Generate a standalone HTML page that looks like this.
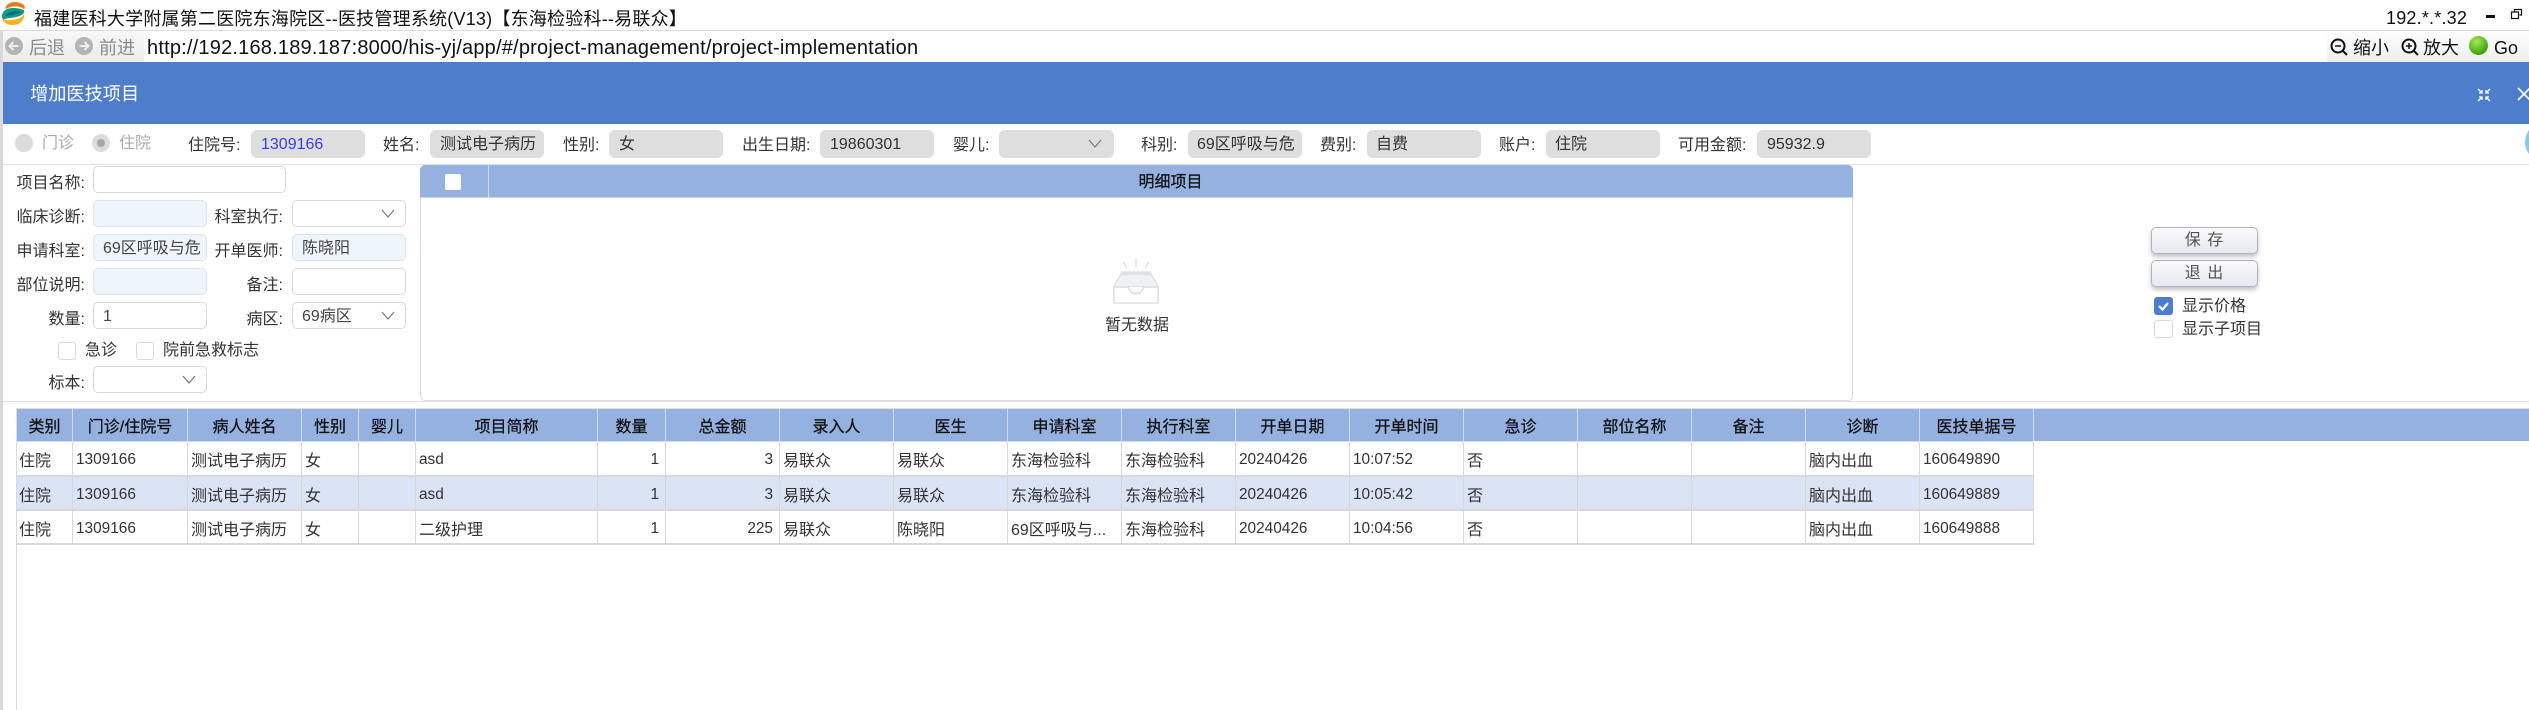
<!DOCTYPE html>
<html lang="zh"><head><meta charset="utf-8"><title>增加医技项目</title>
<style>
html,body{margin:0;padding:0;width:2529px;height:710px;overflow:hidden;background:#fff}
body{position:relative;font-family:"Liberation Sans","Noto Sans CJK SC",sans-serif;font-size:16px;color:#333}
.a,.t,.i,.c{position:absolute;box-sizing:border-box}
.t{white-space:nowrap;line-height:20px;height:20px}
.r{text-align:right}
.i{background:#dedede;border-radius:6px;height:28px;top:130px;width:114px;line-height:30px;padding-left:10px;white-space:nowrap;color:#333;overflow:hidden}
.f{border:1px solid #d9d9d9;background:#fff;border-radius:5px;height:27px;line-height:27px;padding-left:9px;white-space:nowrap;color:#444;position:absolute;box-sizing:border-box;overflow:hidden}
.b{background:#eef5fd;border-color:#dde3ea}
.c{width:18px;height:18px;border:1px solid #d9d9d9;border-radius:3px;background:#fff}
.btn{position:absolute;left:2151px;width:107px;height:27px;border:1px solid #b0b3bd;border-radius:5px;background:linear-gradient(#fafafb,#e6e9f2);box-shadow:0 3px 4px rgba(90,90,100,.35);box-sizing:border-box;text-align:center;line-height:25px;color:#555;font-size:16px;letter-spacing:1px}
table{position:absolute;left:16px;top:408px;border-collapse:collapse;table-layout:fixed;width:2018px;font-size:16px;color:#333}
td,th{border:1px solid #d8d8d8;padding:0 3px;white-space:nowrap;overflow:hidden;box-sizing:border-box;height:34px;font-weight:normal;text-align:left}
td{border-bottom:2px solid #d8d8d8;padding-top:2px}
td:first-child{padding-left:2px}
td.d{font-size:15.4px;padding-top:4px}
th{background:#94b1e0;color:#111;text-align:center;height:33px;border-color:#d3dcec;font-size:16px;-webkit-text-stroke:.25px #111;border-top:1px solid #ddd}
tr.s td{background:#dae4f5}
td.n{text-align:right;padding-right:6px;font-size:15.4px;padding-top:4px}
svg{position:absolute;overflow:visible}
</style></head><body>

<!-- title bar -->
<svg style="left:0;top:0" width="27" height="27" viewBox="0 0 27 27">
<path d="M7 5C11 1 19 1 24 5C25 7 25 9 24 9C20 6 12 5 6 9C5 8 6 6 7 5Z" fill="#ec7a18"/>
<path d="M2 15C3 10 8 8 13 8C18 8 21 9 24 10C25 14 21 16 16 17C11 18 6 18 3 20C2 18 2 17 2 15Z" fill="#129a86"/>
<path d="M8 13C12 11 18 11 21 11C20 13 16 14 13 15C10 15 7 16 5 16C6 15 7 14 8 13Z" fill="#0d6f7f"/>
<path d="M3 20C7 20 14 21 20 18C22 17 24 15 24 13C25 20 20 25 13 25C8 25 4 23 3 20Z" fill="#f2b21c"/>
</svg>
<div class="t" style="left:34px;top:8px;font-size:18px;line-height:22px;height:22px;color:#111;letter-spacing:.22px">福建医科大学附属第二医院东海院区--医技管理系统(V13)【东海检验科--易联众】</div>
<div class="t" style="left:2386px;top:7px;font-size:18px;line-height:22px;height:22px;color:#111;letter-spacing:.2px">192.*.*.32</div>
<div class="a" style="left:2486px;top:15px;width:9px;height:3px;background:#111"></div>
<svg style="left:2511px;top:9px" width="12" height="10" viewBox="0 0 12 10"><path d="M3.5 2.5V.5H10.5V6H8.5M.5 3H7.5V9.5H.5Z" fill="none" stroke="#111" stroke-width="1.2"/></svg>
<div class="a" style="left:0;top:30px;width:2529px;height:1px;background:#dedede"></div>

<!-- address bar -->
<div class="a" style="left:3px;top:31px;width:141px;height:31px;background:linear-gradient(#f8f8f8,#ececec)"></div>
<svg style="left:4px;top:36px" width="20" height="20" viewBox="0 0 20 20"><circle cx="10" cy="10" r="9" fill="#b4b4b4"/><path d="M14.5 10H6M9.5 6L5.5 10L9.5 14" fill="none" stroke="#eee" stroke-width="2"/></svg>
<svg style="left:74px;top:36px" width="20" height="20" viewBox="0 0 20 20"><circle cx="10" cy="10" r="9" fill="#b4b4b4"/><path d="M5.5 10H14M10.5 6L14.5 10L10.5 14" fill="none" stroke="#eee" stroke-width="2"/></svg>
<div class="t" style="left:29px;top:37px;font-size:18px;line-height:22px;height:22px;color:#8a8a8a">后退</div>
<div class="t" style="left:99px;top:37px;font-size:18px;line-height:22px;height:22px;color:#8a8a8a">前进</div>
<div class="t" style="left:147px;top:37px;font-size:20px;line-height:22px;height:22px;color:#111;letter-spacing:.2px">http://192.168.189.187:8000/his-yj/app/#/project-management/project-implementation</div>
<div class="a" style="left:2327px;top:31px;width:202px;height:31px;background:linear-gradient(#fff,#eee)"></div>
<svg style="left:2330px;top:38px" width="18" height="18" viewBox="0 0 18 18"><circle cx="8" cy="8" r="6.5" fill="none" stroke="#111" stroke-width="2"/><path d="M5 8H11" stroke="#111" stroke-width="1.5"/><path d="M13 13L17 17" stroke="#111" stroke-width="2"/></svg>
<div class="t" style="left:2353px;top:37px;font-size:18px;line-height:22px;height:22px;color:#111">缩小</div>
<svg style="left:2401px;top:38px" width="18" height="18" viewBox="0 0 18 18"><circle cx="8" cy="8" r="6.5" fill="none" stroke="#111" stroke-width="2"/><path d="M5 8H11M8 5V11" stroke="#111" stroke-width="1.5"/><path d="M13 13L17 17" stroke="#111" stroke-width="2"/></svg>
<div class="t" style="left:2423px;top:37px;font-size:18px;line-height:22px;height:22px;color:#111">放大</div>
<div class="a" style="left:2469px;top:36px;width:19px;height:19px;border-radius:50%;background:radial-gradient(circle at 40% 30%,#a6e85a,#55b51a 55%,#1f7a0c)"></div>
<div class="t" style="left:2494px;top:37px;font-size:18px;line-height:22px;height:22px;color:#111">Go</div>

<!-- left edge -->
<div class="a" style="left:0;top:31px;width:3px;height:679px;background:#d9d9d9"></div>

<!-- modal header -->
<div class="a" style="left:3px;top:62px;width:2526px;height:62px;background:#4e7ecb"></div>
<div class="t" style="left:30px;top:83px;font-size:18.2px;line-height:22px;height:22px;color:#fff">增加医技项目</div>
<svg style="left:2477px;top:88px" width="14" height="14" viewBox="0 0 14 14"><path d="M1 1L5 5M5 2V5H2M13 1L9 5M9 2V5H12M1 13L5 9M5 12V9H2M13 13L9 9M9 12V9H12" fill="none" stroke="#fff" stroke-width="1.3"/></svg>
<svg style="left:2517px;top:87px" width="14" height="14" viewBox="0 0 14 14"><path d="M1 1L13 13M13 1L1 13" fill="none" stroke="#fff" stroke-width="1.6"/></svg>

<!-- info row -->
<div class="a" style="left:15px;top:134px;width:18px;height:18px;border-radius:50%;background:#dcdcdc"></div>
<div class="t" style="left:42px;top:134px;color:#aaa">门诊</div>
<div class="a" style="left:92px;top:134px;width:18px;height:18px;border-radius:50%;background:#dcdcdc"></div>
<div class="a" style="left:97px;top:139px;width:8px;height:8px;border-radius:50%;background:#a8a8a8"></div>
<div class="t" style="left:119px;top:134px;color:#aaa">住院</div>

<div class="t" style="left:188px;top:136px">住院号:</div><div class="i" style="left:251px;color:#3340e0">1309166</div>
<div class="t" style="left:383px;top:136px">姓名:</div><div class="i" style="left:430px">测试电子病历</div>
<div class="t" style="left:563px;top:136px">性别:</div><div class="i" style="left:609px">女</div>
<div class="t" style="left:742px;top:136px">出生日期:</div><div class="i" style="left:820px">19860301</div>
<div class="t" style="left:953px;top:136px">婴儿:</div><div class="i" style="left:999px;width:115px"></div>
<svg style="left:1088px;top:139px" width="14" height="9" viewBox="0 0 14 9"><path d="M1 1L7 8L13 1" fill="none" stroke="#777" stroke-width="1.2"/></svg>
<div class="t" style="left:1141px;top:136px">科别:</div><div class="i" style="left:1188px;padding-left:9px">69区呼吸与危</div>
<div class="t" style="left:1320px;top:136px">费别:</div><div class="i" style="left:1367px;padding-left:9px">自费</div>
<div class="t" style="left:1499px;top:136px">账户:</div><div class="i" style="left:1546px;padding-left:9px">住院</div>
<div class="t" style="left:1678px;top:136px">可用金额:</div><div class="i" style="left:1757px">95932.9</div>
<div class="a" style="left:2525px;top:122px;width:40px;height:40px;border-radius:50%;background:#86cbe2"></div>
<div class="a" style="left:3px;top:164px;width:2526px;height:1px;background:#e2e2e2"></div>

<!-- form -->
<div class="t r" style="left:0;width:85px;top:174px">项目名称:</div><div class="f" style="left:93px;top:166px;width:193px"></div>
<div class="t r" style="left:0;width:85px;top:208px">临床诊断:</div><div class="f b" style="left:93px;top:200px;width:114px"></div>
<div class="t r" style="left:183px;width:100px;top:208px">科室执行:</div><div class="f" style="left:292px;top:200px;width:114px"></div>
<svg style="left:381px;top:209px" width="14" height="9" viewBox="0 0 14 9"><path d="M1 1L7 8L13 1" fill="none" stroke="#777" stroke-width="1.2"/></svg>
<div class="t r" style="left:0;width:85px;top:242px">申请科室:</div><div class="f b" style="left:93px;top:234px;width:114px">69区呼吸与危</div>
<div class="t r" style="left:183px;width:100px;top:242px">开单医师:</div><div class="f b" style="left:292px;top:234px;width:114px">陈晓阳</div>
<div class="t r" style="left:0;width:85px;top:276px">部位说明:</div><div class="f b" style="left:93px;top:268px;width:114px"></div>
<div class="t r" style="left:183px;width:100px;top:276px">备注:</div><div class="f" style="left:292px;top:268px;width:114px"></div>
<div class="t r" style="left:0;width:85px;top:310px">数量:</div><div class="f" style="left:93px;top:302px;width:114px">1</div>
<div class="t r" style="left:183px;width:100px;top:310px">病区:</div><div class="f" style="left:292px;top:302px;width:114px">69病区</div>
<svg style="left:381px;top:311px" width="14" height="9" viewBox="0 0 14 9"><path d="M1 1L7 8L13 1" fill="none" stroke="#777" stroke-width="1.2"/></svg>
<div class="c" style="left:58px;top:342px"></div><div class="t" style="left:85px;top:341px">急诊</div>
<div class="c" style="left:136px;top:342px"></div><div class="t" style="left:163px;top:341px">院前急救标志</div>
<div class="t r" style="left:0;width:85px;top:374px">标本:</div><div class="f" style="left:93px;top:366px;width:114px"></div>
<svg style="left:182px;top:375px" width="14" height="9" viewBox="0 0 14 9"><path d="M1 1L7 8L13 1" fill="none" stroke="#777" stroke-width="1.2"/></svg>
<div class="a" style="left:3px;top:401px;width:2526px;height:1px;background:#e2e2e2"></div>

<!-- detail table -->
<div class="a" style="left:420px;top:165px;width:1433px;height:236px;border:1px solid #d9d9d9;border-radius:5px;background:#fff"></div>
<div class="a" style="left:420px;top:165px;width:1433px;height:33px;background:#94b1e0;border-radius:5px 5px 0 0;border-bottom:1px solid #ccd4e2"></div>
<div class="a" style="left:488px;top:165px;width:1px;height:33px;background:#d3dcec"></div>
<div class="a" style="left:445px;top:174px;width:16px;height:16px;background:#fff;border-radius:2px"></div>
<div class="t" style="left:489px;width:1363px;top:173px;text-align:center;color:#111;font-size:16px;-webkit-text-stroke:.25px #111">明细项目</div>
<svg style="left:1113px;top:258px" width="46" height="46" viewBox="0 0 46 46">
<path d="M23 0V9M10 4L14 10M36 4L32 10" stroke="#dfe2e7" stroke-width="1.4" fill="none"/>
<path d="M9 14H37L45.500 29H.5Z" fill="#f0f1f3" stroke="#dde0e6" stroke-width="1.2"/>
<path d="M9 15.500H37" stroke="#dde0e6" stroke-width="3"/>
<path d="M.8 29V43Q.8 45 3 45H43Q45.200 45 45.200 43V29" fill="#fff" stroke="#dde0e6" stroke-width="1.6"/>
<path d="M.8 29H16C16 38 30 38 30 29H45.200" fill="#fff" stroke="#dde0e6" stroke-width="1.8"/>
</svg>
<div class="t" style="left:1105px;top:316px;color:#333">暂无数据</div>

<!-- right panel -->
<div class="btn" style="top:227px">保 存</div>
<div class="btn" style="top:260px">退 出</div>
<div class="a" style="left:2154px;top:297px;width:19px;height:18px;background:#4e7ecb;border-radius:3px"></div>
<svg style="left:2154px;top:297px" width="19" height="18" viewBox="0 0 19 18"><path d="M5 9L8.500 12.500L14 6" fill="none" stroke="#fff" stroke-width="2.200"/></svg>
<div class="t" style="left:2182px;top:297px">显示价格</div>
<div class="c" style="left:2154px;top:320px;width:19px"></div>
<div class="t" style="left:2182px;top:320px">显示子项目</div>

<!-- main grid -->
<div class="a" style="left:16px;top:408px;width:2513px;height:33px;background:#94b1e0;border-top:1px solid #ddd"></div>
<div class="a" style="left:16px;top:408px;width:1px;height:302px;background:#d8d8d8"></div>
<table>
<colgroup><col style="width:56px"><col style="width:115px"><col style="width:114px"><col style="width:57px"><col style="width:57px"><col style="width:182px"><col style="width:68px"><col style="width:114px"><col style="width:114px"><col style="width:114px"><col style="width:114px"><col style="width:114px"><col style="width:114px"><col style="width:114px"><col style="width:114px"><col style="width:114px"><col style="width:114px"><col style="width:114px"><col style="width:114px"></colgroup>
<tr><th>类别</th><th>门诊/住院号</th><th>病人姓名</th><th>性别</th><th>婴儿</th><th>项目简称</th><th>数量</th><th>总金额</th><th>录入人</th><th>医生</th><th>申请科室</th><th>执行科室</th><th>开单日期</th><th>开单时间</th><th>急诊</th><th>部位名称</th><th>备注</th><th>诊断</th><th>医技单据号</th></tr>
<tr><td>住院</td><td class="d">1309166</td><td>测试电子病历</td><td>女</td><td></td><td class="d">asd</td><td class="n">1</td><td class="n">3</td><td>易联众</td><td>易联众</td><td>东海检验科</td><td>东海检验科</td><td class="d">20240426</td><td class="d">10:07:52</td><td>否</td><td></td><td></td><td>脑内出血</td><td class="d">160649890</td></tr>
<tr class="s"><td>住院</td><td class="d">1309166</td><td>测试电子病历</td><td>女</td><td></td><td class="d">asd</td><td class="n">1</td><td class="n">3</td><td>易联众</td><td>易联众</td><td>东海检验科</td><td>东海检验科</td><td class="d">20240426</td><td class="d">10:05:42</td><td>否</td><td></td><td></td><td>脑内出血</td><td class="d">160649889</td></tr>
<tr><td>住院</td><td class="d">1309166</td><td>测试电子病历</td><td>女</td><td></td><td>二级护理</td><td class="n">1</td><td class="n">225</td><td>易联众</td><td>陈晓阳</td><td>69区呼吸与...</td><td>东海检验科</td><td class="d">20240426</td><td class="d">10:04:56</td><td>否</td><td></td><td></td><td>脑内出血</td><td class="d">160649888</td></tr>
</table>
</body></html>
